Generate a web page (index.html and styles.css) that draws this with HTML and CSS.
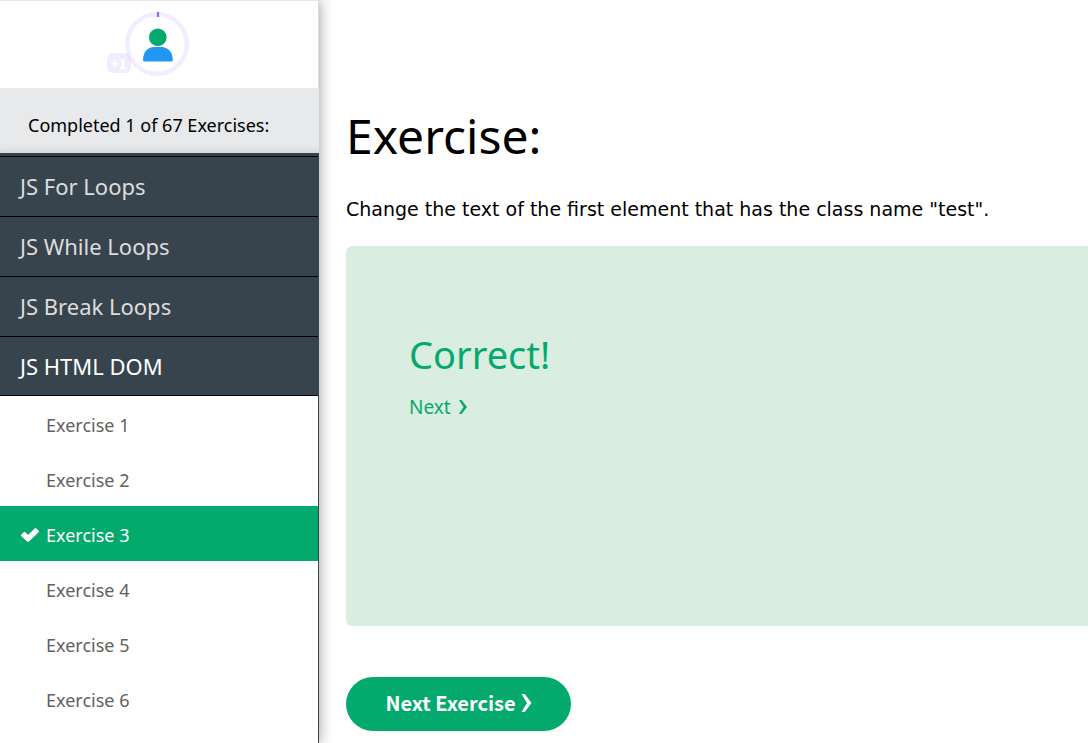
FILE: index.html
```html
<!DOCTYPE html>
<html lang="en">
<head>
<meta charset="utf-8">
<meta name="viewport" content="width=device-width, initial-scale=1">
<title>Exercise</title>
<link rel="stylesheet" href="styles.css">
</head>
<body>
<div class="layout">
  <aside class="sidebar">
    <div class="profile">
      <a class="avatar" href="#profile" aria-label="Profile">
        <svg class="avatar-ring" viewBox="0 0 64 64" aria-hidden="true">
          <circle cx="32" cy="32" r="29.8" fill="none" stroke="#f3eeff" stroke-width="4.4"/>
          <path d="M33 0v5" stroke="#9668f5" stroke-width="2.2"/>
          <circle cx="32.8" cy="25.2" r="8.8" fill="#04aa6d"/>
          <path d="M18 48c0-8 5-13 11-13h7.600c6 0 11.200 5 11.200 13q0 1.400-1.400 1.400H19.400q-1.400 0-1.400-1.400z" fill="#2196f3"/>
        </svg>
        <span class="points">+1</span>
      </a>
    </div>
    <p class="progress">Completed 1 of 67 Exercises:</p>
    <nav class="menu">
      <a class="topic" href="#for">JS For Loops</a>
      <a class="topic" href="#while">JS While Loops</a>
      <a class="topic" href="#break">JS Break Loops</a>
      <a class="topic topic-open" href="#dom">JS HTML DOM</a>
      <div class="exercises">
        <a class="exercise" href="#e1">Exercise 1</a>
        <a class="exercise" href="#e2">Exercise 2</a>
        <a class="exercise exercise-current" href="#e3"><svg class="check" viewBox="0 0 20 16" aria-hidden="true"><path d="M1.400 7.500 3.600 5.300a1.200 1.200 0 0 1 1.700 0L8 8l6.700-6.600a1.200 1.200 0 0 1 1.700 0l2.200 2.200a1.200 1.200 0 0 1 0 1.700L8.900 14.600a1.200 1.200 0 0 1-1.700 0L1.400 9.200a1.200 1.200 0 0 1 0-1.700z" fill="#fff"/></svg>Exercise 3</a>
        <a class="exercise" href="#e4">Exercise 4</a>
        <a class="exercise" href="#e5">Exercise 5</a>
        <a class="exercise" href="#e6">Exercise 6</a>
      </div>
    </nav>
  </aside>
  <main class="content">
    <h1 class="title">Exercise:</h1>
    <p class="task">Change the text of the first element that has the class name "test".</p>
    <section class="result">
      <h2 class="verdict">Correct!</h2>
      <a class="next" href="#next">Next <svg class="chevron" viewBox="0 0 10 16" aria-hidden="true"><path d="M1 1h2.500L9 8l-5.500 7H1l4.500-7z" fill="currentColor"/></svg></a>
    </section>
    <button class="next-button" type="button">Next Exercise <svg class="chevron chevron-large" viewBox="0 0 11 18" aria-hidden="true"><path d="M.5 0h3.200L10.500 9l-6.800 9H.5l5.500-9z" fill="currentColor"/></svg></button>
  </main>
</div>
</body>
</html>
```
FILE: styles.css
```css
* { box-sizing: border-box; }

body {
  margin: 0;
  background: #fff;
  color: #000;
  font-family: "Noto Sans", "Open Sans", sans-serif;
}

a { text-decoration: none; }

.layout {
  display: flex;
  height: 100vh;
  overflow: hidden;
}

.sidebar {
  position: relative;
  display: flex;
  flex-direction: column;
  flex: 0 0 319px;
  box-shadow: 0 0 14px rgba(0, 0, 0, 0.4);
}

.profile {
  display: flex;
  justify-content: center;
  height: 88px;
  padding: 11px 5px 0 0;
  border-top: 1px solid #e7e7e7;
  border-right: 1px solid #d9d9d9;
}

.avatar {
  position: relative;
  width: 64px;
  height: 64px;
}

.avatar-ring { display: block; }

.points {
  position: absolute;
  left: -18px;
  top: 41px;
  width: 24px;
  height: 20px;
  border-radius: 6px;
  background: rgba(150, 104, 245, 0.12);
  color: #fff;
  font: bold 14px/20px "Noto Sans CJK SC", sans-serif;
  text-align: center;
}

.progress {
  margin: 0;
  padding: 24px 20px 14px 28px;
  background: #e7e9eb;
  box-shadow: inset 0 -8px 8px -8px rgba(0, 0, 0, 0.15);
  font-size: 18px;
  line-height: 27px;
}

.menu {
  flex: 1;
  padding-top: 3px;
  background: #38444d;
}

.topic {
  display: block;
  height: 60px;
  margin-right: 1px;
  padding-left: 20px;
  border-top: 1px solid #000;
  color: #ddd;
  font-size: 22px;
  line-height: 59px;
}

.topic-open {
  height: 59px;
  color: #fff;
}

.exercises {
  height: 100%;
  margin-right: 1px;
  border-top: 1px solid #000;
  background: #fff;
}

.exercise {
  display: flex;
  align-items: center;
  height: 55px;
  padding: 2px 0 0 46px;
  color: #616161;
  font-size: 18px;
}

.exercise-current {
  padding-left: 20px;
  background: #04aa6d;
  color: #fff;
}

.check {
  width: 20px;
  height: 16px;
  margin-right: 6px;
}

.content {
  flex: 1;
  min-width: 0;
  padding: 100px 0 12px 27px;
}

.title {
  margin: 0;
  font-size: 48px;
  font-weight: 400;
  line-height: 72px;
}

.task {
  margin: 24px 0;
  font-family: "DejaVu Sans", sans-serif;
  font-size: 19px;
  line-height: 26px;
}

.result {
  height: 380px;
  padding: 78px 63px;
  border-radius: 6px 0 0 6px;
  background: #d9ede1;
  color: #04aa6d;
}

.verdict {
  margin: 0;
  font-size: 38px;
  font-weight: 400;
  line-height: 60px;
}

.next {
  display: inline-flex;
  align-items: center;
  gap: 7px;
  margin-top: 8px;
  color: inherit;
  font-size: 19px;
  line-height: 30px;
}

.chevron {
  width: 10px;
  height: 16px;
}

.chevron-large {
  width: 11px;
  height: 18px;
}

.next-button {
  display: inline-flex;
  align-items: center;
  justify-content: center;
  gap: 5px;
  min-width: 225px;
  height: 54px;
  margin-top: 51px;
  padding: 0 39px 2px;
  border: 0;
  border-radius: 27px;
  background: #04aa6d;
  color: #fff;
  font: bold 20px/30px "Noto Sans CJK SC", sans-serif;
}
```
